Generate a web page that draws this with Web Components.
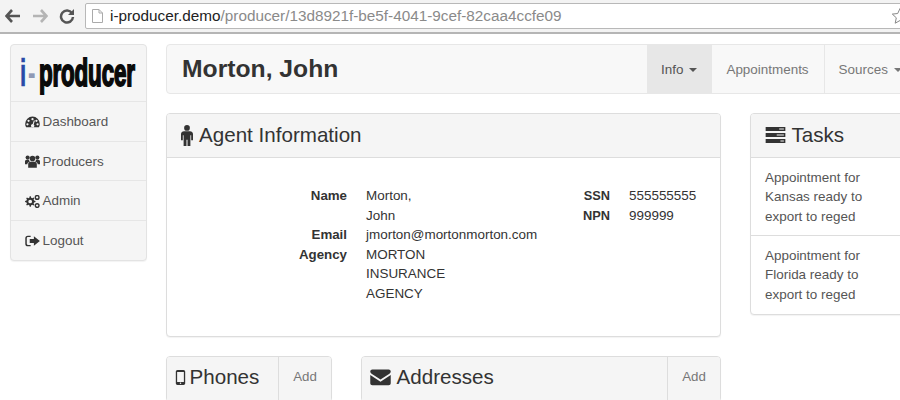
<!DOCTYPE html>
<html>
<head>
<meta charset="utf-8">
<title>i-producer</title>
<style>
html, body { margin: 0; height: 400px; overflow: hidden; background: #fff; }
body { font: 13.45px/19.5px "Liberation Sans", Arial, sans-serif; color: #333; }
</style>
</head>
<body>
<browser-bar></browser-bar>
<app-shell>
  <side-nav slot="side">
    <nav-item label="Dashboard" icon="dashboard"></nav-item>
    <nav-item label="Producers" icon="group"></nav-item>
    <nav-item label="Admin" icon="cogs"></nav-item>
    <nav-item label="Logout" icon="signout"></nav-item>
  </side-nav>
  <top-navbar slot="top" name="Morton, John"></top-navbar>
  <panel-box slot="agent" title="Agent Information" icon="male">
    <agent-info></agent-info>
  </panel-box>
  <panel-box slot="tasks" title="Tasks" icon="tasks">
    <task-list></task-list>
  </panel-box>
  <panel-box slot="phones" title="Phones" icon="mobile" action="Add"></panel-box>
  <panel-box slot="addresses" title="Addresses" icon="envelope" action="Add"></panel-box>
</app-shell>

<script>
// Icon shapes with the part of the drawing grid they fill.
const icons = {
  dashboard: { box: '0 2 16 12', d: '<path fill-rule="evenodd" d="M8 2.500A7.800 7.800 0 0 0 .2 10.300c0 1.300.3 2.600 1 3.500h13.600c.7-.9 1-2.200 1-3.500A7.800 7.800 0 0 0 8 2.500zM8 4a1.200 1.200 0 1 1 0 2.400A1.200 1.200 0 0 1 8 4zM3.800 5.800a1.200 1.200 0 1 1 0 2.400 1.200 1.200 0 0 1 0-2.400zM12.200 5.800a1.200 1.200 0 1 1 0 2.400 1.200 1.200 0 0 1 0-2.400zM2.600 9.500a1.200 1.200 0 1 1 0 2.400 1.200 1.200 0 0 1 0-2.400zM13.400 9.500a1.200 1.200 0 1 1 0 2.400 1.200 1.200 0 0 1 0-2.400zM9.500 6.500l1 .3-1.300 4a1.800 1.800 0 1 1-1-.3z"/>' },
  group: { box: '0 1 16 13.500', d: '<circle cx="8" cy="4.600" r="3"/><circle cx="2.800" cy="3.600" r="2.200"/><circle cx="13.200" cy="3.600" r="2.200"/><path d="M3.400 14.500V10.500C3.400 8.800 4.700 8 6 8h4c1.300 0 2.600.8 2.600 2.500v4zM0 10.800V7.600c0-1 .8-1.800 1.800-1.800h2.400c.1.800.5 1.400 1.100 1.900-1.800.4-2.800 1.500-2.800 3.100zM16 10.800V7.600c0-1-.8-1.800-1.800-1.800h-2.400c-.1.800-.5 1.400-1.100 1.900 1.800.4 2.800 1.500 2.800 3.100z"/>' },
  cogs: { box: '0 1 16 14', d: '<path fill-rule="evenodd" d="M5.500 4l1.200.1.400 1.500 1.200.5 1.300-.8.900.9-.8 1.300.5 1.200 1.500.4v1.200l-1.500.4-.5 1.200.8 1.300-.9.900-1.300-.8-1.200.5-.4 1.500H5.500l-.4-1.500-1.200-.5-1.300.8-.9-.9.8-1.300-.5-1.200L.5 10.300V9.100l1.500-.4.5-1.200-.8-1.300.9-.9 1.300.8 1.200-.5zM6 7.700a2 2 0 1 0 0 4 2 2 0 0 0 0-4z" transform="translate(-.5 -1.700)"/><g fill="none" stroke="currentColor" stroke-width="1.500"><circle cx="13" cy="3.600" r="2"/><circle cx="13" cy="12.400" r="2"/></g>' },
  signout: { box: '0 1.500 16 13', d: '<path d="M6 3H3A2 2 0 0 0 1 5v6a2 2 0 0 0 2 2h3" fill="none" stroke="currentColor" stroke-width="1.600"/><path d="M9.500 2.800L16 8l-6.500 5.200V10.300H5V5.700h4.500z"/>' },
  male: { box: '3.400 0 9.200 16', d: '<circle cx="8" cy="2.200" r="2.200"/><path d="M5.700 4.800h4.600c1.200 0 2.300.9 2.300 2.100v4.700h-1.400V7.800h-.6V16H8.400v-4.800h-.8V16H5.400V7.800h-.6v3.800H3.400V6.900c0-1.200 1.100-2.100 2.300-2.100z"/>' },
  mobile: { box: '3 0 10 16', d: '<path fill-rule="evenodd" d="M4.800 0h6.400C12.200 0 13 .8 13 1.800v12.400c0 1-.8 1.800-1.800 1.800H4.800C3.800 16 3 15.200 3 14.200V1.800C3 .8 3.800 0 4.800 0zM4.400 2v10.800h7.200V2zM8 13.400a.8.8 0 1 0 0 1.600.8.800 0 0 0 0-1.600z"/>' },
  envelope: { box: '0 1.800 16 12.600', d: '<path d="M1.800 2h12.400c.9 0 1.600.7 1.600 1.500 0 .7-.5 1.300-1 1.700L8 9.600 1.200 5.200C.7 4.800.2 4.200.2 3.500.2 2.700.9 2 1.800 2zM.2 6.200L8 11.300l7.800-5.100v6.300c0 .9-.7 1.500-1.600 1.500H1.800c-.9 0-1.600-.6-1.600-1.500z"/>' },
  tasks: { box: '0 1.500 16 13', d: '<path fill-rule="evenodd" d="M0 1.500h16v3.300H0zM11 2.700v.9h3.800v-.9zM0 6.300h16v3.400H0zM9 7.500v1h5.800v-1zM0 11.200h16v3.300H0zM12 12.400v.9h2.800v-.9z"/>' }
}

// Heading icon sizes: width, height, the gap before the title and the left padding.
const headIcons = {
  male: [12, 21, 6, 14],
  mobile: [11, 15, 3.5, 8],
  envelope: [21, 17, 5.5, 8],
  tasks: [21, 16, 5.5, 14]
}

/**
 * Returns the markup of a named icon.
 *
 * @param {string} name The icon name.
 * @param {number} w The width in pixels.
 * @param {number} h The height in pixels.
 * @returns {string} The svg markup.
 */
const iconSvg = (name, w, h) =>
  `<svg viewBox="${icons[name].box}" width="${w}" height="${h}" fill="currentColor" aria-hidden="true">${icons[name].d}</svg>`

customElements.define('browser-bar',
  /**
   * The browser chrome above the page.
   */
  class extends HTMLElement {
    constructor() {
      super()
      this.attachShadow({ mode: 'open' }).innerHTML = `
<style>
:host { display: block; height: 34px; box-sizing: border-box; background: #f3f3f3; border-bottom: 2px solid #b5b5b5; overflow: hidden; }
.row { display: flex; align-items: center; height: 32px; width: 930px; }
svg { display: block; flex: none; }
.back { margin-left: 5px; }
.fwd { margin-left: 11px; }
.reload { margin-left: 11px; }
.url { flex: none; display: flex; align-items: center; box-sizing: border-box; width: 830px; height: 26px; margin: 0 0 0 10px; padding-left: 6px; background: #fff; border: 1px solid #b8b8b8; border-radius: 2px; font: 15.300px/24px "Liberation Sans", Arial, sans-serif; color: #8a8a8a; white-space: nowrap; }
.url b { font-weight: normal; color: #222; }
.url svg { margin-right: 7px; }
.star { position: absolute; left: 891px; top: 7px; }
</style>
<div class="row">
  <svg class="back" width="16" height="14" viewBox="0 0 16 14"><path d="M7 1L1.500 7 7 13M2 7h13" fill="none" stroke="#555" stroke-width="2.600"/></svg>
  <svg class="fwd" width="16" height="14" viewBox="0 0 16 14"><path d="M9 1l5.500 6L9 13M14 7H1" fill="none" stroke="#b4b4b4" stroke-width="2.600"/></svg>
  <svg class="reload" width="16" height="16" viewBox="0 0 16 16"><path d="M13 5.200A6 6 0 1 0 14 9" fill="none" stroke="#555" stroke-width="2.500"/><path d="M15 1v6H9z" fill="#555"/></svg>
  <div class="url">
    <svg width="11" height="14" viewBox="0 0 11 14"><path d="M.5.500h6.500l3.500 3.500v9.500H.5zM7 .5V4h3.500" fill="#fff" stroke="#aaa"/></svg>
    <span><b>i-producer.demo</b>/producer/13d8921f-be5f-4041-9cef-82caa4ccfe09</span>
  </div>
</div>
<svg class="star" width="18" height="18" viewBox="0 0 18 18"><path d="M9 1.500l2.300 5 5.400.6-4 3.700 1.100 5.400L9 13.500l-4.800 2.700 1.100-5.400-4-3.700 5.400-.6z" fill="#fff" stroke="#888"/></svg>`
    }
  }
)

customElements.define('app-shell',
  /**
   * The page grid under the browser bar.
   */
  class extends HTMLElement {
    constructor() {
      super()
      this.attachShadow({ mode: 'open' }).innerHTML = `
<style>
:host { display: flex; align-items: flex-start; gap: 19px; padding: 10px 0 0 10px; width: 940px; box-sizing: border-box; }
.main { flex: none; display: grid; grid-template-columns: 555px 180px; column-gap: 29px; width: 764px; }
.top { grid-column: 1 / 3; margin-bottom: 19px; }
.lower { display: grid; grid-template-columns: 166px 360px; column-gap: 29px; margin-top: 19px; }
</style>
<slot name="side"></slot>
<div class="main">
  <div class="top"><slot name="top"></slot></div>
  <div>
    <slot name="agent"></slot>
    <div class="lower"><slot name="phones"></slot><slot name="addresses"></slot></div>
  </div>
  <div><slot name="tasks"></slot></div>
</div>`
    }
  }
)

customElements.define('side-nav',
  /**
   * The left menu with the logo on top.
   */
  class extends HTMLElement {
    constructor() {
      super()
      this.attachShadow({ mode: 'open' }).innerHTML = `
<style>
:host { display: block; flex: none; width: 137px; box-sizing: border-box; background: #f5f5f5; border: 1px solid #e3e3e3; border-radius: 4px; box-shadow: 0 1px 1px rgba(0,0,0,.05); }
.logo { display: flex; align-items: center; height: 56px; padding-left: 9px; overflow: hidden; white-space: nowrap; }
.logo div { flex: none; font: 700 38px/44px "Liberation Sans", Arial, sans-serif; transform-origin: left center; transform: scaleX(.59); }
.i { color: #2a4aa8; -webkit-text-stroke: .6px #2a4aa8; }
.d { color: #8f99b5; margin-left: 3px; }
.w { color: #0a0a0a; -webkit-text-stroke: 1.900px #0a0a0a; margin-left: 6px; letter-spacing: -.3px; }
</style>
<div class="logo"><div><span class="i">i</span><span class="d">-</span><span class="w">producer</span></div></div>
<slot></slot>`
    }
  }
)

customElements.define('nav-item',
  /**
   * One entry of the left menu.
   */
  class extends HTMLElement {
    constructor() {
      super()
      const name = this.getAttribute('icon')
      const height = name === 'dashboard' ? 11.500 : name === 'group' ? 13 : name === 'cogs' ? 13 : 12
      this.attachShadow({ mode: 'open' }).innerHTML = `
<style>
:host { display: flex; align-items: center; gap: 2.500px; height: 39.700px; box-sizing: border-box; padding: 1px 0 0 14px; border-top: 1px solid #e6e6e6; color: #555; }
svg { color: #333; flex: none; }
</style>
${iconSvg(name, 15, height)}<span>${this.getAttribute('label')}</span>`
    }
  }
)

customElements.define('top-navbar',
  /**
   * The title bar with the name and its tabs.
   */
  class extends HTMLElement {
    constructor() {
      super()
      this.attachShadow({ mode: 'open' }).innerHTML = `
<style>
:host { display: flex; align-items: stretch; height: 50px; width: 770px; box-sizing: border-box; background: #f8f8f8; border: 1px solid #e7e7e7; border-radius: 4px; }
h1 { flex: none; width: 465px; margin: 0; padding-left: 15px; font: 700 24.700px/48px "Liberation Sans", Arial, sans-serif; color: #333; }
.tab { display: flex; align-items: center; padding: 1px 15px 0 14px; color: #777; white-space: nowrap; }
.tab.on { background: #e7e7e7; color: #555; }
.tab.last { border-left: 1px solid #e7e7e7; flex: 1; }
.caret { display: inline-block; margin-left: 6px; border-top: 4px solid currentColor; border-left: 4px solid transparent; border-right: 4px solid transparent; }
</style>
<h1>${this.getAttribute('name')}</h1>
<div class="tab on">Info<span class="caret"></span></div>
<div class="tab">Appointments</div>
<div class="tab last">Sources<span class="caret"></span></div>`
    }
  }
)

customElements.define('panel-box',
  /**
   * A panel with a heading, an optional action and body content.
   */
  class extends HTMLElement {
    constructor() {
      super()
      const action = this.getAttribute('action')
      const name = this.getAttribute('icon')
      const [w, h, gap, pad] = headIcons[name]
      this.attachShadow({ mode: 'open' }).innerHTML = `
<style>
:host { display: block; box-sizing: border-box; background: #fff; border: 1px solid #ddd; border-radius: 4px; box-shadow: 0 1px 1px rgba(0,0,0,.05); }
header { display: flex; align-items: stretch; height: 43px; background: #f5f5f5; border-bottom: 1px solid #ddd; border-radius: 3px 3px 0 0; }
h3 { flex: 1; display: flex; align-items: center; gap: ${gap}px; margin: 0; padding: 0 0 ${action ? 3 : 1}px ${pad}px; font: 400 20.600px/24px "Liberation Sans", Arial, sans-serif; color: #333; white-space: nowrap; }
h3 svg { flex: none; }
.act { flex: none; display: flex; align-items: center; justify-content: center; width: 52px; padding-bottom: 3px; border-left: 1px solid #ddd; font-size: 13.300px; color: #777; }
</style>
<header><h3>${iconSvg(name, w, h)}<span>${this.getAttribute('title')}</span></h3>${action ? `<div class="act">${action}</div>` : ''}</header>
<slot></slot>`
    }
  }
)

customElements.define('agent-info',
  /**
   * The two columns of agent details.
   */
  class extends HTMLElement {
    constructor() {
      super()
      this.attachShadow({ mode: 'open' }).innerHTML = `
<style>
:host { display: flex; height: 178px; box-sizing: border-box; padding-top: 28px; color: #333; }
dl { display: grid; margin: 0; align-content: start; }
dt { font-weight: 700; font-size: 13.300px; text-align: right; }
dd { margin: 0; }
.a { grid-template-columns: 180px 96px; column-gap: 19px; }
.m { white-space: nowrap; }
.b { grid-template-columns: 60px auto; column-gap: 19px; margin-left: 88px; }
.b dt { font-size: 12.800px; }
</style>
<dl class="a">
  <dt>Name</dt><dd>Morton,<br>John</dd>
  <dt>Email</dt><dd class="m">jmorton@mortonmorton.com</dd>
  <dt>Agency</dt><dd>MORTON<br>INSURANCE<br>AGENCY</dd>
</dl>
<dl class="b">
  <dt>SSN</dt><dd>555555555</dd>
  <dt>NPN</dt><dd>999999</dd>
</dl>`
    }
  }
)

customElements.define('task-list',
  /**
   * The list of open tasks.
   */
  class extends HTMLElement {
    constructor() {
      super()
      this.attachShadow({ mode: 'open' }).innerHTML = `
<style>
:host { display: block; color: #555; }
div { padding: 9.500px 14px 9px; white-space: nowrap; }
div + div { border-top: 1px solid #ddd; padding-bottom: 10px; }
</style>
<div>Appointment for<br>Kansas ready to<br>export to reged</div>
<div>Appointment for<br>Florida ready to<br>export to reged</div>`
    }
  }
)
</script>
</body>
</html>
